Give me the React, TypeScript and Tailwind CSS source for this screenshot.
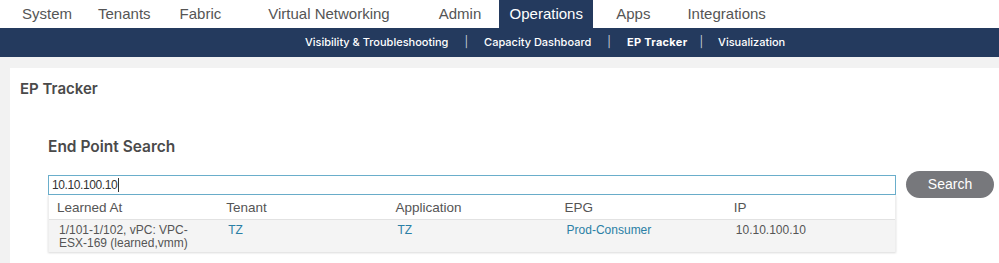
import React from "react";

const topNav = [
  { label: "System", ml: "ml-[22px]" },
  { label: "Tenants", ml: "ml-[26px]" },
  { label: "Fabric", ml: "ml-[29px]" },
  { label: "Virtual Networking", ml: "ml-[47px]" },
  { label: "Admin", ml: "ml-[49px]" },
];

const subNav = [
  { label: "Visibility & Troubleshooting", sep: "" },
  { label: "Capacity Dashboard", sep: "mx-[16px]" },
  { label: "EP Tracker", sep: "mx-[16px]", active: true },
  { label: "Visualization", sep: "ml-[12px] mr-[15px]" },
];

export default function App() {
  return (
    <div className="w-[999px] h-[263px] overflow-hidden bg-[#f2f2f2] font-['Inter',sans-serif]">
      {/* Top navigation */}
      <div className="h-[28px] bg-white flex items-stretch text-[15px] text-[#555] font-['Liberation_Sans',sans-serif]">
        {topNav.map((item) => (
          <div key={item.label} className={`${item.ml} flex items-center`}>
            {item.label}
          </div>
        ))}
        <div className="ml-[18px] w-[94px] bg-[#243a5e] text-white flex items-center justify-center">
          Operations
        </div>
        <div className="ml-[23px] flex items-center">Apps</div>
        <div className="ml-[37px] flex items-center">Integrations</div>
      </div>

      {/* Sub navigation */}
      <div className="h-[29px] bg-[#243a5e] flex items-center pl-[305px] text-[11px] text-white">
        {subNav.map((item, i) => (
          <React.Fragment key={item.label}>
            {i > 0 && <span className={`${item.sep} text-[#c9d1dd]`}>|</span>}
            <span className={item.active ? "font-bold tracking-[0.3px]" : "font-medium"}>{item.label}</span>
          </React.Fragment>
        ))}
      </div>

      {/* Content */}
      <div className="ml-[10px] mt-[11px] bg-white h-[200px]">
        <div className="pl-[10px] pt-[10px] text-[15px] font-semibold text-[#4a4a4a]">EP Tracker</div>

        <div className="pl-[38px] pt-[34px]">
          <div className="text-[15.5px] font-semibold text-[#4a4a4a]">End Point Search</div>

          <div className="mt-[17px] flex items-start">
            <div className="w-[848px]">
              <div className="h-[20px] border border-[#6aaecb] flex items-center pl-[3px] text-[12px] text-[#333] font-['Liberation_Sans',sans-serif] tracking-[-0.4px]">
                10.10.100.10<span className="ml-[1px] w-px h-[14px] bg-[#333]" />
              </div>
              <div className="font-['Liberation_Sans',sans-serif] shadow-[0_1px_2px_rgba(0,0,0,0.15)] border-x border-[#eee]">
                <div className="grid grid-cols-5 h-[24px] pt-[2px] items-center bg-white text-[13.5px] text-[#555]">
                  <div className="pl-[8px]">Learned At</div>
                  <div className="pl-[8px]">Tenant</div>
                  <div className="pl-[8px]">Application</div>
                  <div className="pl-[8px]">EPG</div>
                  <div className="pl-[8px]">IP</div>
                </div>
                <div className="grid grid-cols-5 h-[33px] bg-[#f4f4f4] border-t border-[#e2e2e2] pt-[4px] text-[12px] leading-[13px] text-[#555]">
                  <div className="pl-[10px]">
                    1/101-1/102, vPC: VPC-
                    <br />
                    ESX-169 (learned,vmm)
                  </div>
                  <div className="pl-[10px] text-[#2a7fa5]">TZ</div>
                  <div className="pl-[10px] text-[#2a7fa5]">TZ</div>
                  <div className="pl-[10px] text-[#2a7fa5]">Prod-Consumer</div>
                  <div className="pl-[10px]">10.10.100.10</div>
                </div>
              </div>
            </div>
            <button className="ml-[10px] -mt-[4px] w-[88px] h-[27px] rounded-full bg-[#77787c] text-white text-[14px] font-['Liberation_Sans',sans-serif]">
              Search
            </button>
          </div>
        </div>
      </div>
    </div>
  );
}
